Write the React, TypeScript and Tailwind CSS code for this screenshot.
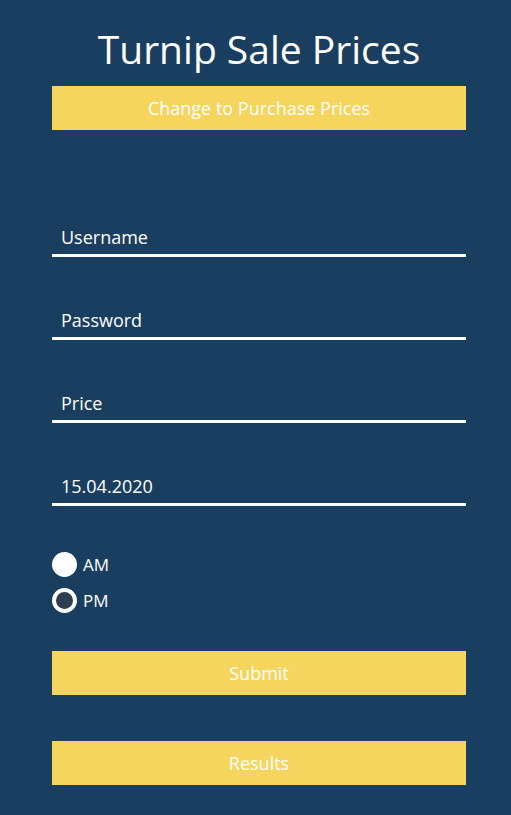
import { useState } from "react";

const fieldClass =
    "w-full h-[38px] bg-transparent border-0 border-b-[3px] border-white pl-[9px] text-[18px] text-white placeholder:text-white outline-none";

const App = () => {
    const [time, setTime] = useState<"AM" | "PM">("PM");

    return (
        <div className="h-screen w-full overflow-hidden bg-[#1a3e60] font-['Open_Sans',sans-serif]">
            <div className="ml-[52px] w-[414px]">
                <h1 className="pt-[25px] text-center text-[39px] leading-[48px] text-white">
                    Turnip Sale Prices
                </h1>
                <button className="mt-[13px] block h-11 w-full bg-[#f5d55d] text-[18px] text-white">
                    Change to Purchase Prices
                </button>

                <div className="mt-[89px] flex flex-col gap-[45px]">
                    <input className={fieldClass} placeholder="Username" />
                    <input className={fieldClass} placeholder="Password" type="password" />
                    <input className={fieldClass} placeholder="Price" />
                    <input className={fieldClass} defaultValue="15.04.2020" />
                </div>

                <div className="mt-[46px] flex flex-col gap-[11px]">
                    {(["AM", "PM"] as const).map((t) => (
                        <label key={t} className="flex h-[25px] cursor-pointer items-center gap-[6px]">
                            <span
                                className={
                                    time === t
                                        ? "box-border h-[25px] w-[25px] rounded-full border-[4px] border-solid border-white bg-[#2f3d50]"
                                        : "h-[25px] w-[25px] rounded-full bg-white"
                                }
                                onClick={() => setTime(t)}
                            />
                            <span className="text-[17px] text-white">{t}</span>
                        </label>
                    ))}
                </div>

                <button className="mt-[38px] block h-11 w-full bg-[#f5d55d] text-[18px] text-white">
                    Submit
                </button>
                <button className="mt-[46px] block h-11 w-full bg-[#f5d55d] text-[18px] text-white">
                    Results
                </button>
            </div>
        </div>
    );
};

export default App;
